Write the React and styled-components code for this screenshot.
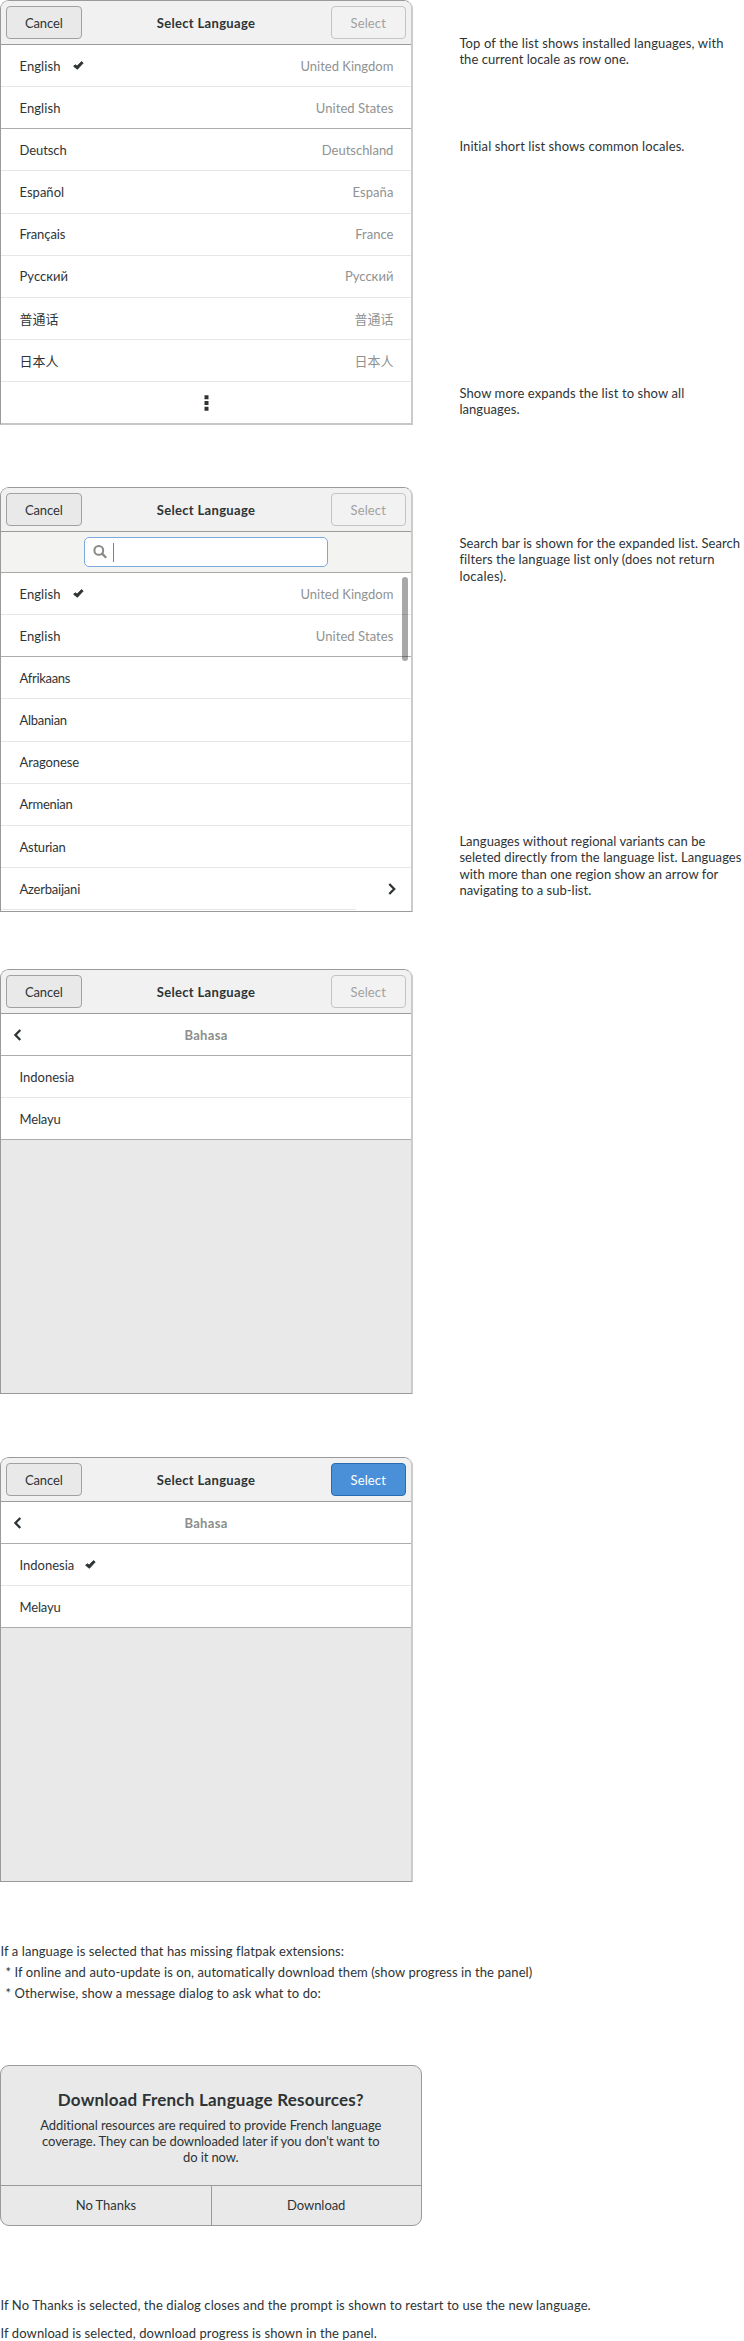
import React from "react";
import styled, { createGlobalStyle, css } from "styled-components";

const ink = "#2e3436";
const muted = "#8f9291";
const line = "#9a9a98";
const hairline = "#e6e6e6";
const shade = "#e9e9e9";

const GlobalStyle = createGlobalStyle`
  *, *::before, *::after { box-sizing: border-box; }
  body {
    margin: 0;
    background: #fff;
    color: ${ink};
    font: 13px "Lato", "Noto Sans CJK SC", sans-serif;
  }
`;

const Page = styled.main`
  width: 744px;
  height: 2341px;
  overflow: hidden;
`;

const Section = styled.section`
  display: flex;
  align-items: flex-start;
  gap: 46.4px;
  height: 425px;
  margin-bottom: ${(p) => p.$after}px;
`;

const Window = styled.div`
  position: relative;
  display: flex;
  flex-direction: column;
  flex: none;
  width: 413px;
  height: 425px;
  overflow: hidden;
  background: ${(p) => (p.$empty ? shade : "#fff")};
  border: 1px solid ${line};
  border-right: 2px solid #cbcbca;
  border-bottom: ${(p) => (p.$softBottom ? "2px solid #c6c6c5" : `1px solid ${line}`)};
  border-radius: 9px 9px 0 0;
`;

const HeaderBar = styled.header`
  display: grid;
  grid-template-columns: 75.5px 1fr 75.5px;
  align-items: start;
  flex: none;
  height: 44px;
  padding: 5px 5px 0;
  background: #f1f1f1;
  border-bottom: 1px solid ${line};
`;

const Text = styled.span`
  letter-spacing: ${(p) => p.$track || 0}px;
  white-space: nowrap;
`;

const Heading = styled.h2`
  margin: 0;
  font-size: 13px;
  font-weight: 700;
  line-height: 34px;
  letter-spacing: 0.33px;
  text-align: center;
`;

const buttonLook = {
  normal: css`
    color: ${ink};
    background: #e9e9e9;
    border-color: #a1a1a0;
  `,
  disabled: css`
    color: #a0a2a1;
    background: #f2f2f2;
    border-color: #c4c4c3;
  `,
  suggested: css`
    color: #fff;
    background: #4a90d9;
    border-color: #2a6cb3;
  `,
};

const Button = styled.button`
  height: 32.5px;
  padding: 1px 0 0;
  font: inherit;
  line-height: 30px;
  border: 1px solid;
  border-radius: 4px;
  ${(p) => buttonLook[p.$look || "normal"]}
`;

const Row = styled.div`
  display: flex;
  align-items: center;
  flex: none;
  height: 42.17px;
  padding: 0 17.6px 0 18.5px;
  line-height: 20px;
  background: #fff;
  border-bottom: 1px solid ${(p) => (p.$strong ? "#adadac" : hairline)};
`;

const LastRow = styled(Row)`
  padding-right: 14.6px;
  border-bottom-color: transparent;
  background: linear-gradient(${hairline}, ${hairline}) 0 100% / 355px 1px no-repeat border-box #fff;
`;

const MoreRow = styled(Row)`
  flex: 1;
  justify-content: center;
  padding: 0;
  border-bottom: 0;
`;

const Region = styled(Text)`
  margin-left: auto;
  color: ${muted};
`;

const SubHeader = styled.div`
  display: grid;
  grid-template-columns: 20px 1fr 20px;
  align-items: center;
  flex: none;
  height: 42.17px;
  padding: 0 12px;
  background: #fff;
  border-bottom: 1px solid #adadac;
`;

const SubTitle = styled.h3`
  margin: 0;
  color: #8b8e8d;
  font-size: 13px;
  line-height: 20px;
  letter-spacing: 0.32px;
  text-align: center;
`;

const SearchBar = styled.div`
  display: flex;
  align-items: center;
  justify-content: center;
  flex: none;
  height: 41px;
  background: #f3f3f2;
  border-bottom: 1px solid #a9a9a8;
`;

const SearchField = styled.div`
  display: flex;
  align-items: center;
  gap: 6px;
  width: 244px;
  height: 30px;
  padding-left: 8px;
  background: #fff;
  border: 1px solid #7ba9dc;
  border-radius: 5px;
`;

const Caret = styled.i`
  width: 1px;
  height: 19px;
  background: #80827f;
`;

const ScrollThumb = styled.div`
  position: absolute;
  top: 89px;
  right: 3px;
  width: 6px;
  height: 84px;
  border-radius: 3px;
  background: rgba(0, 0, 0, 0.34);
`;

const Icon = styled.svg`
  display: block;
  flex: none;
  margin-left: ${(p) => p.$gap || 0}px;
`;

const Pushed = styled.span`
  margin-left: auto;
`;

const Notes = styled.aside`
  flex: 1;
`;

const Note = styled.p`
  display: flex;
  flex-direction: column;
  margin: 0;
  padding-top: ${(p) => p.$before}px;
  line-height: 16.4px;
`;

const Remarks = styled.div`
  display: flex;
  flex-direction: column;
  padding-left: 0.5px;
  line-height: ${(p) => p.$leading}px;
`;

const Bullet = styled(Text)`
  padding-left: 5px;
`;

const MessageDialog = styled.div`
  display: flex;
  flex-direction: column;
  width: 421.6px;
  height: 161px;
  margin: 60.7px 0 65px;
  overflow: hidden;
  text-align: center;
  background: ${shade};
  border: 1px solid ${line};
  border-radius: 9px;
`;

const MessageBody = styled.div`
  display: flex;
  flex-direction: column;
  flex: 1;
  padding-top: 22.6px;
  line-height: 16.3px;
`;

const MessageTitle = styled.h1`
  margin: 0 0 6.3px;
  font-size: 17px;
  line-height: 22px;
  letter-spacing: 0.217px;
`;

const Actions = styled.div`
  display: grid;
  grid-template-columns: 1fr 1fr;
  height: 40px;
  border-top: 1px solid ${line};
`;

const Action = styled.button`
  padding: 0;
  color: inherit;
  font: inherit;
  line-height: 39px;
  letter-spacing: -0.05px;
  background: none;
  border: 0;

  & + & {
    border-left: 1px solid ${line};
  }
`;

const Check = ({ gap }) => (
  <Icon $gap={gap} width="11" height="9" viewBox="0 0 11 9">
    <path d="M.6 5.3 2.1 3.8 4.2 4.9 8.6.6 10.2 2 4.4 8.3Z" fill={ink} stroke={ink} strokeWidth=".9" strokeLinejoin="round" />
  </Icon>
);

const ChevronRight = () => (
  <Icon width="8" height="12" viewBox="0 0 8 12">
    <path d="M1.3 1 6.2 6 1.3 11" fill="none" stroke={ink} strokeWidth="2.3" />
  </Icon>
);

const ChevronLeft = () => (
  <Icon width="9" height="12" viewBox="0 0 9 12">
    <path d="M7.3 1 2.4 6 7.3 11" fill="none" stroke={ink} strokeWidth="2.3" />
  </Icon>
);

const Magnifier = () => (
  <Icon width="14" height="14" viewBox="0 0 14 14">
    <circle cx="5.8" cy="5.4" r="4.4" fill="none" stroke="#888a85" strokeWidth="2" />
    <path d="m8.8 8.4 4.4 4.4" fill="none" stroke="#888a85" strokeWidth="2.3" />
  </Icon>
);

const Dots = () => (
  <Icon width="5" height="16" viewBox="0 0 5 16">
    <path d="M.5.3h4v4h-4zM.5 6h4v4h-4zM.5 11.7h4v4h-4z" fill={ink} />
  </Icon>
);

const Header = ({ ready }) => (
  <HeaderBar>
    <Button><Text $track={-0.13}>Cancel</Text></Button>
    <Heading>Select Language</Heading>
    <Button $look={ready ? "suggested" : "disabled"}><Text $track={0.13}>Select</Text></Button>
  </HeaderBar>
);

const InstalledRows = () => (
  <>
    <Row>
      <Text $track={0.09}>English</Text>
      <Check gap={12.5} />
      <Region $track={0.01}>United Kingdom</Region>
    </Row>
    <Row $strong>
      <Text $track={0.09}>English</Text>
      <Region $track={0.07}>United States</Region>
    </Row>
  </>
);

const commonLocales = [
  ["Deutsch", -0.07, "Deutschland", -0.01],
  ["Español", 0.02, "España", 0.05],
  ["Français", -0.09, "France", 0.02],
  ["Русский", 0.03, "Русский", 0.03],
  ["普通话", 0, "普通话", 0],
  ["日本人", 0, "日本人", 0],
];

const languages = [
  ["Afrikaans", -0.3],
  ["Albanian", -0.3],
  ["Aragonese", -0.12],
  ["Armenian", -0.27],
  ["Asturian", -0.24],
];

const BahasaWindow = ({ chosen }) => (
  <Window $empty>
    <Header ready={chosen} />
    <SubHeader>
      <ChevronLeft />
      <SubTitle>Bahasa</SubTitle>
    </SubHeader>
    <Row>
      <Text>Indonesia</Text>
      {chosen && <Check gap={10.5} />}
    </Row>
    <Row $strong>
      <Text $track={-0.16}>Melayu</Text>
    </Row>
  </Window>
);

export default function App() {
  return (
    <Page>
      <GlobalStyle />
      <Section $after={62}>
        <Window $softBottom>
          <Header />
          <InstalledRows />
          {commonLocales.map(([name, track, region, regionTrack]) => (
            <Row key={name}>
              <Text $track={track}>{name}</Text>
              <Region $track={regionTrack}>{region}</Region>
            </Row>
          ))}
          <MoreRow><Dots /></MoreRow>
        </Window>
        <Notes>
          <Note $before={34.6}>
            <Text $track={0.12}>Top of the list shows installed languages, with</Text>
            <Text $track={0.047}>the current locale as row one.</Text>
          </Note>
          <Note $before={70.3}>
            <Text $track={0.1}>Initial short list shows common locales.</Text>
          </Note>
          <Note $before={230.9}>
            <Text $track={0.098}>Show more expands the list to show all</Text>
            <Text $track={0.067}>languages.</Text>
          </Note>
        </Notes>
      </Section>

      <Section $after={57}>
        <Window>
          <Header />
          <SearchBar>
            <SearchField>
              <Magnifier />
              <Caret />
            </SearchField>
          </SearchBar>
          <InstalledRows />
          {languages.map(([name, track]) => (
            <Row key={name}>
              <Text $track={track}>{name}</Text>
            </Row>
          ))}
          <LastRow>
            <Text $track={-0.22}>Azerbaijani</Text>
            <Pushed><ChevronRight /></Pushed>
          </LastRow>
          <ScrollThumb />
        </Window>
        <Notes>
          <Note $before={47.8}>
            <Text $track={0.058}>Search bar is shown for the expanded list. Search</Text>
            <Text $track={0.1}>filters the language list only (does not return</Text>
            <Text $track={0.26}>locales).</Text>
          </Note>
          <Note $before={248.8}>
            <Text $track={0.029}>Languages without regional variants can be</Text>
            <Text $track={0.054}>seleted directly from the language list. Languages</Text>
            <Text $track={0.037}>with more than one region show an arrow for</Text>
            <Text $track={0.022}>navigating to a sub-list.</Text>
          </Note>
        </Notes>
      </Section>

      <Section $after={63}>
        <BahasaWindow />
      </Section>

      <Section $after={59}>
        <BahasaWindow chosen />
      </Section>

      <Remarks $leading={21.1}>
        <Text $track={0.077}>If a language is selected that has missing flatpak extensions:</Text>
        <Bullet $track={0.085}>* If online and auto-update is on, automatically download them (show progress in the panel)</Bullet>
        <Bullet $track={0.108}>* Otherwise, show a message dialog to ask what to do:</Bullet>
      </Remarks>

      <MessageDialog>
        <MessageBody>
          <MessageTitle>Download French Language Resources?</MessageTitle>
          <Text $track={-0.084}>Additional resources are required to provide French language</Text>
          <Text $track={-0.084}>coverage. They can be downloaded later if you don't want to</Text>
          <Text $track={-0.116}>do it now.</Text>
        </MessageBody>
        <Actions>
          <Action>No Thanks</Action>
          <Action>Download</Action>
        </Actions>
      </MessageDialog>

      <Remarks $leading={28.5}>
        <Text $track={0.092}>If No Thanks is selected, the dialog closes and the prompt is shown to restart to use the new language.</Text>
        <Text $track={0.091}>If download is selected, download progress is shown in the panel.</Text>
      </Remarks>
    </Page>
  );
}
